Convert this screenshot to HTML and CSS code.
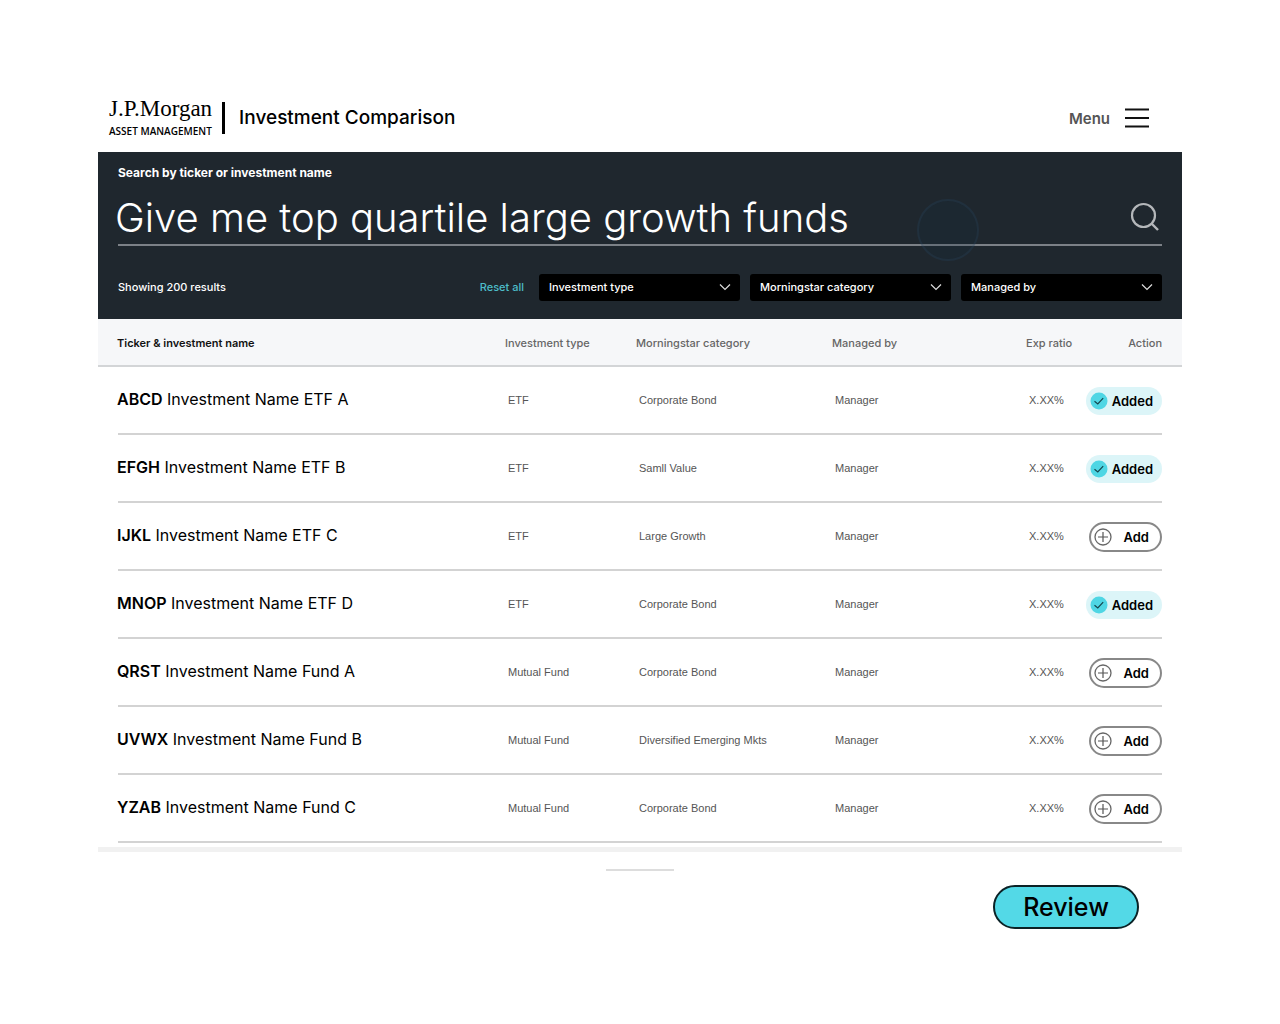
FILE: index.html
```html
<!DOCTYPE html>
<html lang="en">
<head>
  <meta charset="UTF-8">
  <meta name="viewport" content="width=device-width, initial-scale=1.0">
  <title>Investment Comparison</title>
  <link rel="stylesheet" href="styles.css">
</head>
<body>
  <svg class="sprite" aria-hidden="true">
    <symbol id="icon-chevron" viewBox="0 0 12 8">
      <path d="M1 1.5 6 6.5 11 1.5" fill="none" stroke="currentColor" stroke-width="1.2"/>
    </symbol>
    <symbol id="icon-check" viewBox="0 0 18 18">
      <circle cx="9" cy="9" r="8.5" fill="#4fd6e4"/>
      <path d="M4.5 9.2 7.8 12 13.2 6.2" fill="none" stroke="#14454d" stroke-width="1.2"/>
    </symbol>
    <symbol id="icon-plus" viewBox="0 0 18 18">
      <circle cx="9" cy="9" r="8" fill="none" stroke="#666" stroke-width="1.3"/>
      <path d="M9 4v10M4 9h10" fill="none" stroke="#555" stroke-width="1.2"/>
    </symbol>
  </svg>

  <div class="app">
    <header>
      <div class="logo">
        <span class="logo-name">J.P.Morgan</span>
        <span class="logo-sub">ASSET MANAGEMENT</span>
      </div>
      <h1>Investment Comparison</h1>
      <button class="menu" type="button">
        Menu
        <svg width="26" height="20" viewBox="0 0 26 20" aria-hidden="true">
          <path d="M1 1.5h24M1 10h24M1 18.5h24" stroke="#111" stroke-width="2"/>
        </svg>
      </button>
    </header>

    <form class="search">
      <label for="query">Search by ticker or investment name</label>
      <div class="search-field">
        <span class="pointer"></span>
        <input type="text" id="query" value="Give me top quartile large growth funds">
        <button type="button" aria-label="Search">
          <svg width="30" height="30" viewBox="0 0 30 30" aria-hidden="true">
            <circle cx="13.5" cy="13.5" r="11.5" fill="none" stroke="#b4b7ba" stroke-width="2.2"/>
            <path d="M21.5 21.5 28 28" stroke="#b4b7ba" stroke-width="2.4"/>
          </svg>
        </button>
      </div>
      <div class="filters">
        <span class="count">Showing 200 results</span>
        <a href="#" class="reset">Reset all</a>
        <div class="select">
          <select aria-label="Investment type"><option>Investment type</option></select>
          <svg aria-hidden="true"><use href="#icon-chevron"/></svg>
        </div>
        <div class="select">
          <select aria-label="Morningstar category"><option>Morningstar category</option></select>
          <svg aria-hidden="true"><use href="#icon-chevron"/></svg>
        </div>
        <div class="select">
          <select aria-label="Managed by"><option>Managed by</option></select>
          <svg aria-hidden="true"><use href="#icon-chevron"/></svg>
        </div>
      </div>
    </form>

    <table>
      <colgroup>
        <col>
        <col class="col-type">
        <col class="col-category">
        <col class="col-manager">
        <col class="col-ratio">
        <col class="col-action">
      </colgroup>
      <thead>
        <tr>
          <th>Ticker &amp; investment name</th>
          <th>Investment type</th>
          <th>Morningstar category</th>
          <th>Managed by</th>
          <th>Exp ratio</th>
          <th>Action</th>
        </tr>
      </thead>
      <tbody>
        <tr>
          <td><b>ABCD</b> Investment Name ETF A</td>
          <td>ETF</td>
          <td>Corporate Bond</td>
          <td>Manager</td>
          <td>X.XX%</td>
          <td><button type="button" class="pill added"><svg aria-hidden="true"><use href="#icon-check"/></svg>Added</button></td>
        </tr>
        <tr>
          <td><b>EFGH</b> Investment Name ETF B</td>
          <td>ETF</td>
          <td>Samll Value</td>
          <td>Manager</td>
          <td>X.XX%</td>
          <td><button type="button" class="pill added"><svg aria-hidden="true"><use href="#icon-check"/></svg>Added</button></td>
        </tr>
        <tr>
          <td><b>IJKL</b> Investment Name ETF C</td>
          <td>ETF</td>
          <td>Large Growth</td>
          <td>Manager</td>
          <td>X.XX%</td>
          <td><button type="button" class="pill"><svg aria-hidden="true"><use href="#icon-plus"/></svg>Add</button></td>
        </tr>
        <tr>
          <td><b>MNOP</b> Investment Name ETF D</td>
          <td>ETF</td>
          <td>Corporate Bond</td>
          <td>Manager</td>
          <td>X.XX%</td>
          <td><button type="button" class="pill added"><svg aria-hidden="true"><use href="#icon-check"/></svg>Added</button></td>
        </tr>
        <tr>
          <td><b>QRST</b> Investment Name Fund A</td>
          <td>Mutual Fund</td>
          <td>Corporate Bond</td>
          <td>Manager</td>
          <td>X.XX%</td>
          <td><button type="button" class="pill"><svg aria-hidden="true"><use href="#icon-plus"/></svg>Add</button></td>
        </tr>
        <tr>
          <td><b>UVWX</b> Investment Name Fund B</td>
          <td>Mutual Fund</td>
          <td>Diversified Emerging Mkts</td>
          <td>Manager</td>
          <td>X.XX%</td>
          <td><button type="button" class="pill"><svg aria-hidden="true"><use href="#icon-plus"/></svg>Add</button></td>
        </tr>
        <tr>
          <td><b>YZAB</b> Investment Name Fund C</td>
          <td>Mutual Fund</td>
          <td>Corporate Bond</td>
          <td>Manager</td>
          <td>X.XX%</td>
          <td><button type="button" class="pill"><svg aria-hidden="true"><use href="#icon-plus"/></svg>Add</button></td>
        </tr>
      </tbody>
    </table>

    <footer>
      <span class="handle"></span>
      <button type="button" class="review">Review</button>
    </footer>
  </div>
</body>
</html>
```
FILE: styles.css
```css
* {
  box-sizing: border-box;
}

body {
  margin: 0;
  background-color: #fff;
  color: #000;
  font-family: Inter, 'Liberation Sans', sans-serif;
}

button,
input,
select {
  font-family: inherit;
  color: inherit;
  margin: 0;
}

button {
  border: none;
  background: none;
  padding: 0;
  cursor: pointer;
}

.sprite {
  display: none;
}

.app {
  margin: 84px 98px 0;
}

/* header */

header {
  display: flex;
  align-items: center;
  height: 68px;
  padding: 0 32px 0 11px;
}

.logo {
  display: flex;
  flex-direction: column;
}

.logo-name {
  font-family: 'Liberation Serif', serif;
  font-size: 23px;
  line-height: 22px;
}

.logo-sub {
  padding-top: 4px;
  font-family: 'Open Sans', sans-serif;
  font-size: 10px;
  font-weight: 600;
  line-height: 14px;
}

h1 {
  margin: 0 auto 0 10px;
  padding-left: 14px;
  border-left: 3px solid #000;
  font-size: 19px;
  font-weight: 500;
  line-height: 32px;
}

.menu {
  display: flex;
  align-items: center;
  gap: 14px;
  color: #555;
  font-size: 15px;
  font-weight: 600;
}

/* search */

.search {
  padding: 12px 20px 18px;
  background-color: #1f272e;
  color: #fff;
}

.search label {
  display: block;
  font-size: 12px;
  font-weight: 700;
  line-height: 18px;
}

.search-field {
  position: relative;
  display: flex;
  align-items: center;
  height: 64px;
  padding: 8px 2px 0 0;
  border-bottom: 2px solid #7c8187;
}

.search-field input {
  position: relative;
  flex: 1;
  min-width: 0;
  height: 52px;
  margin-left: -3px;
  padding: 0;
  border: none;
  outline: none;
  background: none;
  font-size: 40px;
  font-weight: 300;
}

.search-field button {
  display: flex;
}

.pointer {
  position: absolute;
  top: 17px;
  right: 183px;
  width: 62px;
  height: 62px;
  border: 2px solid rgba(50, 80, 110, 0.2);
  border-radius: 50%;
  background-color: rgba(20, 45, 65, 0.2);
}

.filters {
  display: flex;
  align-items: center;
  gap: 10px;
  margin-top: 28px;
  font-size: 11px;
  font-weight: 500;
}

.count,
.reset {
  padding-bottom: 2px;
}

.count {
  flex: 1;
}

.reset {
  margin-right: 5px;
  color: #4dbdc9;
  text-decoration: none;
}

.select {
  position: relative;
  width: 201px;
}

.select select {
  display: block;
  width: 100%;
  height: 27px;
  padding: 0 30px 2px 10px;
  border: none;
  border-radius: 3px;
  background-color: #000;
  color: #fff;
  font-size: 11px;
  font-weight: 500;
  appearance: none;
}

.select svg {
  position: absolute;
  top: 9px;
  right: 9px;
  width: 12px;
  height: 8px;
  color: #ddd;
  pointer-events: none;
}

/* results */

table {
  width: 100%;
  table-layout: fixed;
  border-collapse: collapse;
}

.col-type {
  width: 131px;
}

.col-category {
  width: 196px;
}

.col-manager {
  width: 194px;
}

.col-ratio {
  width: 58px;
}

.col-action {
  width: 98px;
}

thead tr {
  height: 48px;
  background: linear-gradient(#d3d5d7, #d3d5d7) bottom / 100% 2px no-repeat #f6f7f9;
}

th {
  padding: 0;
  color: #666;
  font-size: 11px;
  font-weight: 500;
  text-align: left;
  white-space: nowrap;
}

th:first-child {
  color: #111;
  font-weight: 600;
}

/* row lines stop short of the table edge */
tbody tr {
  height: 68px;
  background: linear-gradient(#d3d3d3, #d3d3d3) bottom / calc(100% - 40px) 2px no-repeat;
}

td {
  padding: 0 0 2px 3px;
  color: #555;
  font-family: 'Liberation Sans', sans-serif;
  font-size: 11px;
  white-space: nowrap;
}

td:first-child {
  padding-bottom: 4px;
  color: #000;
  font-family: Inter, sans-serif;
  font-size: 16px;
}

td:first-child b {
  font-weight: 600;
}

th:first-child,
td:first-child {
  padding-left: 19px;
}

th:last-child,
td:last-child {
  padding-right: 20px;
  text-align: right;
}

td:last-child {
  padding-bottom: 0;
  padding-left: 0;
}

.pill {
  display: inline-flex;
  align-items: center;
  justify-content: space-between;
  width: 73px;
  height: 30px;
  padding: 0 11px 0 3px;
  border: 2px solid #888;
  border-radius: 15px;
  color: #000;
  font-family: Inter, sans-serif;
  font-size: 13px;
  font-weight: 600;
  vertical-align: middle;
}

.pill svg {
  width: 18px;
  height: 18px;
}

.pill.added {
  width: 76px;
  height: 28px;
  padding: 0 9px 0 4px;
  border: none;
  background-color: #dcf5f8;
}

/* bottom sheet */

footer {
  display: flex;
  flex-direction: column;
  align-items: center;
  margin-top: 4px;
  padding: 17px 43px 0;
  border-top: 5px solid #f1f1f1;
}

.handle {
  width: 68px;
  height: 2px;
  background-color: #ddd;
}

.review {
  align-self: flex-end;
  width: 146px;
  height: 44px;
  margin-top: 14px;
  border: 2px solid #0b2226;
  border-radius: 22px;
  background-color: #53d9e7;
  font-size: 25px;
  font-weight: 500;
}
```
